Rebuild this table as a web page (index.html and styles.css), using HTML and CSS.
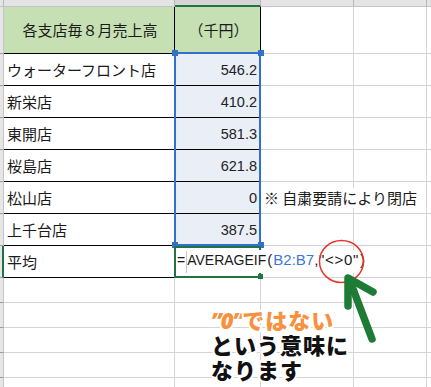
FILE: index.html
```html
<!DOCTYPE html>
<html lang="ja">
<head>
<meta charset="utf-8">
<title>AVERAGEIF</title>
<link rel="stylesheet" href="styles.css">
</head>
<body>
<div class="wrap">
  <div class="sheet">
    <!-- column header strip -->
    <div class="ch corner"></div><div class="ch"></div><div class="ch sel"></div><div class="ch"></div><div class="ch"></div><div class="ch"></div>
    <!-- row 1 -->
    <div class="rh"></div>
    <div class="c hd">各支店毎８月売上高</div>
    <div class="c hd">（千円）</div>
    <div class="c"></div><div class="c"></div><div class="c"></div>
    <!-- row 2 -->
    <div class="rh"></div>
    <div class="c a">ウォーターフロント店</div>
    <div class="c b">546.2</div>
    <div class="c"></div><div class="c"></div><div class="c"></div>
    <!-- row 3 -->
    <div class="rh"></div>
    <div class="c a">新栄店</div>
    <div class="c b">410.2</div>
    <div class="c"></div><div class="c"></div><div class="c"></div>
    <!-- row 4 -->
    <div class="rh"></div>
    <div class="c a">東開店</div>
    <div class="c b">581.3</div>
    <div class="c"></div><div class="c"></div><div class="c"></div>
    <!-- row 5 -->
    <div class="rh"></div>
    <div class="c a">桜島店</div>
    <div class="c b">621.8</div>
    <div class="c"></div><div class="c"></div><div class="c"></div>
    <!-- row 6 -->
    <div class="rh"></div>
    <div class="c a">松山店</div>
    <div class="c b">0</div>
    <div class="c note"><span class="over">※ 自粛要請により閉店</span></div><div class="c"></div><div class="c"></div>
    <!-- row 7 -->
    <div class="rh"></div>
    <div class="c a">上千台店</div>
    <div class="c b">387.5</div>
    <div class="c"></div><div class="c"></div><div class="c"></div>
    <!-- row 8 -->
    <div class="rh act"></div>
    <div class="c a">平均</div>
    <div class="c fx"><span class="formula">=<span class="cur"></span>AVERAGEIF<span class="par">(</span><span class="ref">B2:B7</span><span class="tail">,"&lt;&gt;0"</span><span class="par">)</span></span></div>
    <div class="c"></div><div class="c"></div><div class="c"></div>
    <!-- empty rows -->
    <div class="rh"></div><div class="c e"></div><div class="c e"></div><div class="c e"></div><div class="c e"></div><div class="c e"></div>
    <div class="rh"></div><div class="c e"></div><div class="c e"></div><div class="c e"></div><div class="c e"></div><div class="c e"></div>
    <div class="rh"></div><div class="c e"></div><div class="c e"></div><div class="c e"></div><div class="c e"></div><div class="c e"></div>
    <div class="rh"></div><div class="c e"></div><div class="c e"></div><div class="c e"></div><div class="c e"></div><div class="c e"></div>
    <div class="rh"></div><div class="c e"></div><div class="c e"></div><div class="c e"></div><div class="c e"></div><div class="c e"></div>
  </div>

  <!-- selection overlays -->
  <div class="selbox"></div>
  <div class="hdl h1"></div><div class="hdl h2"></div><div class="hdl h3"></div><div class="hdl h4"></div>
  <div class="actbox"></div>
  <div class="acthdl"></div>

  <!-- annotation -->
  <svg class="marks" width="431" height="387" viewBox="0 0 431 387">
    <ellipse cx="341.5" cy="261.5" rx="22" ry="21" fill="none" stroke="#e8352b" stroke-width="1.5"/>
    <path d="M372 339 L350 281" fill="none" stroke="#1e7b36" stroke-width="7.5" stroke-linecap="round"/>
    <path d="M348 306 L348 278 L373 292" fill="none" stroke="#1e7b36" stroke-width="7.5" stroke-linecap="round" stroke-linejoin="round"/>
  </svg>
  <div class="callout">
    <div class="ln l1"><span class="q">”0”</span>ではない</div>
    <div class="ln">という意味に</div>
    <div class="ln">なります</div>
  </div>
</div>
</body>
</html>
```

FILE: styles.css
```css
html, body {
  margin: 0;
  padding: 0;
  background: #ffffff;
}
body {
  width: 431px;
  height: 387px;
  overflow: hidden;
  font-family: "Noto Sans CJK JP", "Noto Sans", sans-serif;
}
.wrap {
  position: relative;
  width: 431px;
  height: 387px;
  overflow: hidden;
}
.sheet {
  display: grid;
  grid-template-columns: 4px 171px 86px 93px 73px 12px;
  grid-template-rows: 7px 47px repeat(7, 32px) repeat(5, 25px);
}
.sheet > div {
  box-sizing: border-box;
}
.ch {
  background: #e4e4e4;
  border-right: 1px solid #b8b8b8;
  border-bottom: 1px solid #c4c4c4;
}
.ch.sel {
  background: #d6d6d6;
  border-bottom: 2px solid #217346;
}
.ch.corner {
  border-right: 1px solid #b8b8b8;
}
.rh {
  background: #e6e6e6;
  border-right: 1px solid #c4c4c4;
  border-bottom: 1px solid #9c9c9c;
}
.rh.act {
  border-right: 2px solid #217346;
}
.c {
  border-right: 1px solid #d4d4d4;
  border-bottom: 1px solid #d4d4d4;
  display: flex;
  align-items: center;
  font-size: 15px;
  line-height: 20px;
  color: #1a1a1a;
  white-space: nowrap;
}
.hd {
  background: #c6e0b4;
  border-right: 1px solid #000;
  border-bottom: 1px solid #000;
  justify-content: center;
  padding-left: 2px;
}
.a {
  border-right: 1px solid #000;
  border-bottom: 1px solid #000;
  padding-left: 3px;
}
.b {
  background: #e9eef7;
  border-right: 1px solid #000;
  border-bottom: 1px solid #000;
  justify-content: flex-end;
  padding-right: 3px;
  font-family: "Liberation Sans", Arial, sans-serif;
  font-size: 14.5px;
  color: #222;
}
.note {
  padding-left: 3px;
}
.over {
  position: relative;
  z-index: 1;
  background: #fff;
}
.fx {
  border-right: 1px solid #000;
  border-bottom: 1px solid #000;
  padding-left: 2px;
}
.formula {
  position: relative;
  z-index: 2;
  background: #fff;
  font-family: "Liberation Sans", Arial, sans-serif;
  font-size: 14px;
  color: #1a1a1a;
  padding-right: 1px;
}
.par {
  font-size: 15px;
  padding: 0 1px;
}
.tail {
  font-size: 15px;
  letter-spacing: 0.7px;
}
.cur {
  display: inline-block;
  width: 1px;
  height: 22px;
  background: #c8c8c8;
  vertical-align: middle;
  margin: 0 0 0 1px;
}
.ref {
  font-size: 15px;
  color: #3a78d6;
}

/* selection overlays */
.selbox,
.hdl,
.actbox,
.acthdl {
  z-index: 1;
}
.marks,
.callout {
  z-index: 3;
}
.selbox {
  position: absolute;
  left: 174px;
  top: 52px;
  width: 87px;
  height: 194px;
  box-sizing: border-box;
  border: 2px solid #3270cc;
}
.hdl {
  position: absolute;
  width: 6px;
  height: 6px;
  background: #3270cc;
}
.h1 { left: 172px; top: 50px; }
.h2 { left: 258px; top: 50px; }
.h3 { left: 172px; top: 242px; }
.h4 { left: 258px; top: 242px; }
.actbox {
  position: absolute;
  left: 174px;
  top: 246px;
  width: 87px;
  height: 32px;
  box-sizing: border-box;
  border: 2px solid #217346;
}
.acthdl {
  position: absolute;
  left: 258px;
  top: 274px;
  width: 5px;
  height: 5px;
  background: #217346;
}

/* annotation */
.marks {
  position: absolute;
  left: 0;
  top: 0;
}
.callout {
  position: absolute;
  left: 211px;
  top: 307px;
  font-family: "Noto Sans CJK JP", sans-serif;
  font-weight: 900;
  font-size: 22px;
  color: #111;
  white-space: nowrap;
  -webkit-text-stroke: 4px #fff;
  paint-order: stroke fill;
}
.ln {
  height: 25px;
  line-height: 25px;
  letter-spacing: 1px;
}
.l1 {
  color: #f8903e;
}
.q {
  font-family: "Noto Sans", sans-serif;
  font-weight: 900;
  font-style: italic;
  letter-spacing: -1px;
}
```
